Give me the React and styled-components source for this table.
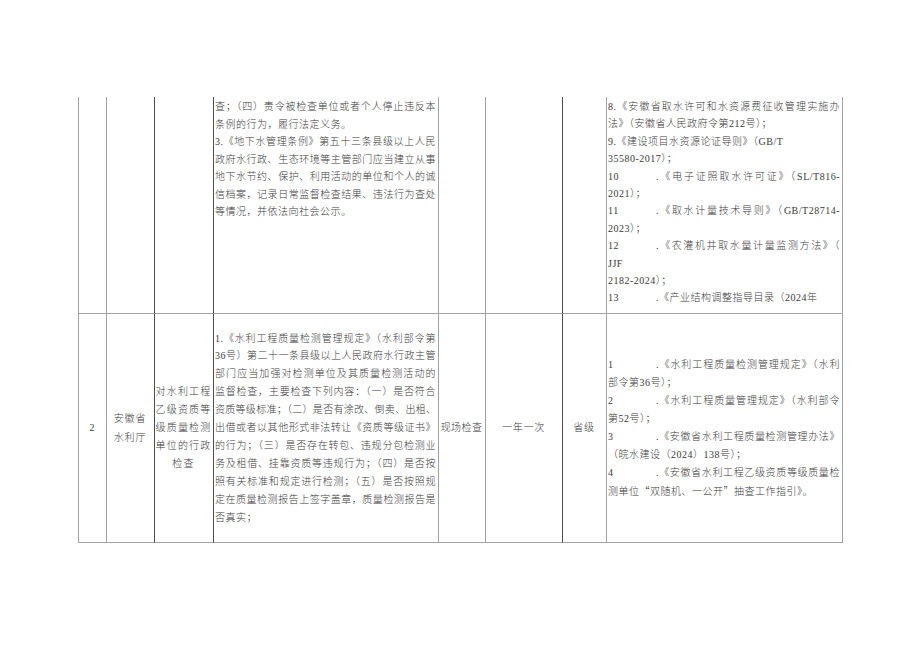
import React from "react";
import styled, { createGlobalStyle } from "styled-components";

const Global = createGlobalStyle`
  html, body { margin: 0; padding: 0; background: #fff; }
  body { width: 920px; height: 651px; overflow: hidden; }
`;

const Page = styled.div`
  padding: 97px 0 0 78px;
`;

const Table = styled.div`
  display: grid;
  grid-template-columns: 28px 48px 59px 225px 47px 77px 44px 236px;
  grid-template-rows: 217px 229px;
  width: 765px;
  border-left: 1px solid #a2a2a2;
  font-family: "Liberation Serif", "Noto Sans CJK SC", serif;
  font-size: 10px;
  font-weight: 300;
  color: #3a3a3a;
  box-sizing: border-box;
`;

const Cell = styled.div`
  box-sizing: border-box;
  border-right: 1px solid ${(p) => (p.$dark ? "#4d4d4d" : "#a2a2a2")};
  border-bottom: 1px solid #a2a2a2;
  display: flex;
  flex-direction: column;
  justify-content: ${(p) => (p.$top ? "flex-start" : "center")};
  align-items: ${(p) => (p.$center ? "center" : "stretch")};
  padding: ${(p) => (p.$top ? "1px 2px 0 1px" : "0 2px 0 1px")};
  line-height: ${(p) => p.$lh || "17.5px"};
  overflow: hidden;
`;

const Line = styled.div`
  text-align: ${(p) => (p.$j ? "justify" : "left")};
  text-align-last: ${(p) => (p.$j ? "justify" : "auto")};
  letter-spacing: ${(p) => (p.$tight ? "0" : "0.5px")};
  white-space: normal;
`;

const CenterText = styled.div`
  text-align: center;
  letter-spacing: ${(p) => p.$ls || "0.8px"};
  white-space: nowrap;
`;

const Num = styled.span`
  display: inline-block;
  width: 48px;
`;

const Quote = styled.span`
  font-family: "Noto Sans CJK SC", sans-serif;
`;

export default function App() {
  return (
    <>
      <Global />
      <Page>
        <Table>
          {/* Row 1 (continued from previous page) */}
          <Cell />
          <Cell $dark />
          <Cell $dark />
          <Cell $top>
            <Line $j>查；（四）责令被检查单位或者个人停止违反本</Line>
            <Line>条例的行为，履行法定义务。</Line>
            <Line $j>3.《地下水管理条例》第五十三条县级以上人民</Line>
            <Line $j>政府水行政、生态环境等主管部门应当建立从事</Line>
            <Line $j>地下水节约、保护、利用活动的单位和个人的诚</Line>
            <Line $j>信档案，记录日常监督检查结果、违法行为查处</Line>
            <Line>等情况，并依法向社会公示。</Line>
          </Cell>
          <Cell />
          <Cell $dark />
          <Cell />
          <Cell $top $lh="17.4px">
            <Line $j>8.《安徽省取水许可和水资源费征收管理实施办</Line>
            <Line>法》（安徽省人民政府令第212号）；</Line>
            <Line>9.《建设项目水资源论证导则》（GB/T</Line>
            <Line>35580-2017）；</Line>
            <Line $j>
              <Num>10</Num>.《电子证照取水许可证》（SL/T816-
            </Line>
            <Line>2021）；</Line>
            <Line $j>
              <Num>11</Num>.《取水计量技术导则》（GB/T28714-
            </Line>
            <Line>2023）；</Line>
            <Line $j>
              <Num>12</Num>.《农灌机井取水量计量监测方法》（
            </Line>
            <Line>JJF</Line>
            <Line>2182-2024）；</Line>
            <Line>
              <Num>13</Num>.《产业结构调整指导目录（2024年
            </Line>
          </Cell>

          {/* Row 2 */}
          <Cell $center>
            <CenterText $ls="0">2</CenterText>
          </Cell>
          <Cell $dark $center $lh="19px">
            <CenterText>安徽省</CenterText>
            <CenterText>水利厅</CenterText>
          </Cell>
          <Cell $dark $center $lh="18px">
            <CenterText $ls="1.2px">对水利工程</CenterText>
            <CenterText $ls="1.2px">乙级资质等</CenterText>
            <CenterText $ls="1.2px">级质量检测</CenterText>
            <CenterText $ls="1.2px">单位的行政</CenterText>
            <CenterText $ls="1.2px">检查</CenterText>
          </Cell>
          <Cell $lh="17.9px">
            <Line $j>1.《水利工程质量检测管理规定》（水利部令第</Line>
            <Line $j>36号）第二十一条县级以上人民政府水行政主管</Line>
            <Line $j>部门应当加强对检测单位及其质量检测活动的</Line>
            <Line $j>监督检查，主要检查下列内容：（一）是否符合</Line>
            <Line $j $tight>资质等级标准；（二）是否有涂改、倒卖、出租、</Line>
            <Line $j>出借或者以其他形式非法转让《资质等级证书》</Line>
            <Line $j>的行为；（三）是否存在转包、违规分包检测业</Line>
            <Line $j>务及租借、挂靠资质等违规行为；（四）是否按</Line>
            <Line $j>照有关标准和规定进行检测；（五）是否按照规</Line>
            <Line $j>定在质量检测报告上签字盖章，质量检测报告是</Line>
            <Line>否真实；</Line>
          </Cell>
          <Cell $center>
            <CenterText $ls="0.4px">现场检查</CenterText>
          </Cell>
          <Cell $dark $center>
            <CenterText>一年一次</CenterText>
          </Cell>
          <Cell $center>
            <CenterText>省级</CenterText>
          </Cell>
          <Cell $lh="18px">
            <Line $j>
              <Num>1</Num>.《水利工程质量检测管理规定》（水利
            </Line>
            <Line>部令第36号）；</Line>
            <Line $j>
              <Num>2</Num>.《水利工程质量管理规定》（水利部令
            </Line>
            <Line>第52号）；</Line>
            <Line $j>
              <Num>3</Num>.《安徽省水利工程质量检测管理办法》
            </Line>
            <Line>（皖水建设（2024）138号）；</Line>
            <Line $j>
              <Num>4</Num>.《安徽省水利工程乙级资质等级质量检
            </Line>
            <Line>
              测单位<Quote>“</Quote>双随机、一公开<Quote>”</Quote>抽查工作指引》。
            </Line>
          </Cell>
        </Table>
      </Page>
    </>
  );
}
